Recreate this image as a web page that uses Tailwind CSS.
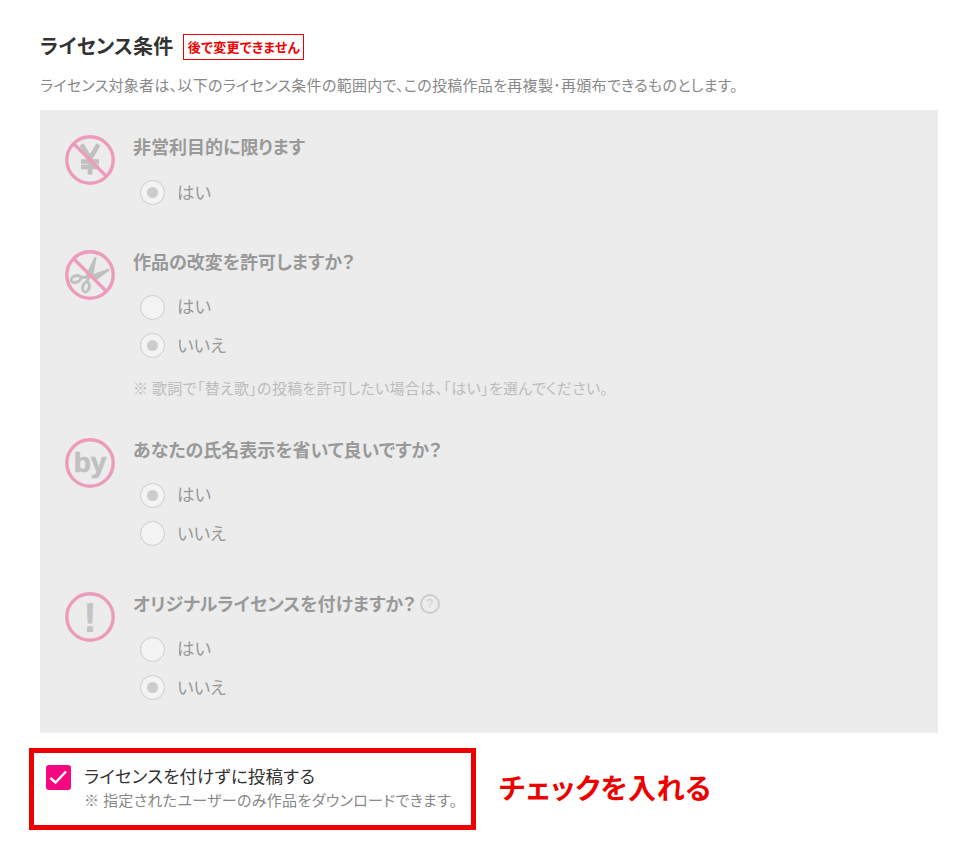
<!DOCTYPE html>
<html lang="ja">
<head>
  <meta charset="UTF-8" />
  <title>ライセンス条件</title>
  <script src="https://cdn.jsdelivr.net/npm/@tailwindcss/browser@4"></script>
</head>
<body class="bg-white font-['Noto_Sans_CJK_JP','Noto_Sans',sans-serif] text-[#333] [font-feature-settings:'palt']">

  <div class="w-[978px] h-[861px] pl-[40px] pr-[40px] pt-[34px] overflow-hidden">

    <!-- 見出し -->
    <div class="flex items-center h-[26px]">
      <h2 class="text-[20px] leading-[26px] font-bold tracking-[0.2px] -mt-[2px]">ライセンス条件</h2>
      <span class="ml-[10px] w-[121px] h-[26px] border border-[#f00000] text-[#f00000] text-[13px] font-bold leading-[23px] text-center tracking-[0.3px]">後で変更できません</span>
    </div>
    <p class="mt-[13px] h-[24px] text-[15px] leading-[24px] text-[#888] tracking-[0.3px]">ライセンス対象者は、以下のライセンス条件の範囲内で、この投稿作品を再複製･再頒布できるものとします。</p>

    <!-- 条件パネル -->
    <div class="mt-[13px] w-[898px] bg-[#ececec] pt-[25px] pb-[26px] pl-[25px]">

      <!-- 非営利 -->
      <div class="flex mb-[38.5px]">
        <svg class="w-[50px] h-[50px] shrink-0" viewBox="0 0 50 50">
          <g fill="none" stroke="#c0c0c0" stroke-width="4.6">
            <path d="M16.5 9.5 L25 23.5 L33.5 9.5"/>
            <path d="M25 23 V39.5"/>
            <path d="M16 26.5 H34"/>
            <path d="M16 32 H34"/>
          </g>
          <circle cx="25" cy="25" r="23.2" fill="none" stroke="#ed9bbb" stroke-width="3.4"/>
          <line x1="8.5" y1="8.5" x2="41.5" y2="41.5" stroke="#ed9bbb" stroke-width="3.2"/>
        </svg>
        <div class="ml-[18px] -mt-[1px]">
          <h3 class="text-[18px] leading-[25px] font-bold text-[#999] mb-[14px]">非営利目的に限ります</h3>
          <div class="flex items-center h-[38.5px] pl-[7px]">
            <span class="w-[25px] h-[25px] rounded-full border border-[#ccc] bg-[#f3f3f3] flex items-center justify-center"><span class="w-[11px] h-[11px] rounded-full bg-[#ccc]"></span></span>
            <span class="ml-[12px] text-[17.5px] leading-[24px] -mt-[1px] text-[#999]">はい</span>
          </div>
        </div>
      </div>

      <!-- 改変 -->
      <div class="flex mb-[40px]">
        <svg class="w-[50px] h-[50px] shrink-0" viewBox="0 0 50 50">
          <g fill="none" stroke="#c0c0c0" stroke-width="3">
            <ellipse cx="11" cy="29" rx="5" ry="3.2" transform="rotate(-20 11 29)"/>
            <ellipse cx="21" cy="37" rx="3.2" ry="5" transform="rotate(15 21 37)"/>
            <path d="M15.5 27.5 L25 27"/>
            <path d="M22 32 L24 27"/>
          </g>
          <path d="M20.5 26 L29.5 7 L31.5 7.2 L28 27 Z" fill="#c0c0c0"/>
          <path d="M27 24.5 L44 18.5 L44.5 20.5 L31 30.5 Z" fill="#c0c0c0"/>
          <circle cx="25" cy="25" r="23.2" fill="none" stroke="#ed9bbb" stroke-width="3.4"/>
          <line x1="8.5" y1="8.5" x2="41.5" y2="41.5" stroke="#ed9bbb" stroke-width="3.2"/>
        </svg>
        <div class="ml-[18px] -mt-[1px]">
          <h3 class="text-[18px] leading-[25px] font-bold text-[#999] mb-[14px]">作品の改変を許可しますか？</h3>
          <div class="flex items-center h-[38.5px] pl-[7px]">
            <span class="w-[25px] h-[25px] rounded-full border border-[#ccc] bg-[#f3f3f3]"></span>
            <span class="ml-[12px] text-[17.5px] leading-[24px] -mt-[2px] text-[#999]">はい</span>
          </div>
          <div class="flex items-center h-[38.5px] pl-[7px]">
            <span class="w-[25px] h-[25px] rounded-full border border-[#ccc] bg-[#f3f3f3] flex items-center justify-center"><span class="w-[11px] h-[11px] rounded-full bg-[#ccc]"></span></span>
            <span class="ml-[12px] text-[17.5px] leading-[24px] -mt-[2px] text-[#999]">いいえ</span>
          </div>
          <p class="mt-[13px] text-[15px] leading-[20px] text-[#bbb] tracking-[0.33px]">※ 歌詞で「替え歌」の投稿を許可したい場合は、「はい」を選んでください。</p>
        </div>
      </div>

      <!-- 氏名表示 -->
      <div class="flex mb-[39px]">
        <svg class="w-[50px] h-[50px] shrink-0" viewBox="0 0 50 50">
          <circle cx="25" cy="25" r="23.2" fill="none" stroke="#ed9bbb" stroke-width="3.4"/>
          <text x="25" y="33.5" text-anchor="middle" font-family="Liberation Sans" font-weight="700" font-size="28" fill="#c0c0c0" stroke="#c0c0c0" stroke-width="0.7">by</text>
        </svg>
        <div class="ml-[18px] -mt-[1px]">
          <h3 class="text-[18px] leading-[25px] font-bold text-[#999] mb-[14px]">あなたの氏名表示を省いて良いですか？</h3>
          <div class="flex items-center h-[38.5px] pl-[7px]">
            <span class="w-[25px] h-[25px] rounded-full border border-[#ccc] bg-[#f3f3f3] flex items-center justify-center"><span class="w-[11px] h-[11px] rounded-full bg-[#ccc]"></span></span>
            <span class="ml-[12px] text-[17.5px] leading-[24px] -mt-[2px] text-[#999]">はい</span>
          </div>
          <div class="flex items-center h-[38.5px] pl-[7px]">
            <span class="w-[25px] h-[25px] rounded-full border border-[#ccc] bg-[#f3f3f3]"></span>
            <span class="ml-[12px] text-[17.5px] leading-[24px] -mt-[2px] text-[#999]">いいえ</span>
          </div>
        </div>
      </div>

      <!-- オリジナル -->
      <div class="flex">
        <svg class="w-[50px] h-[50px] shrink-0" viewBox="0 0 50 50">
          <circle cx="25" cy="25" r="23.2" fill="none" stroke="#ed9bbb" stroke-width="3.4"/>
          <text x="25" y="40" text-anchor="middle" font-family="Liberation Sans" font-weight="700" font-size="42" fill="#c4c4c4">!</text>
        </svg>
        <div class="ml-[18px] -mt-[1px]">
          <div class="flex items-center mb-[14px]">
            <h3 class="text-[18px] leading-[25px] font-bold text-[#999]">オリジナルライセンスを付けますか？</h3>
            <span class="ml-[4px] w-[20px] h-[20px] rounded-full border-2 border-[#ccc] text-[#ccc] text-[13px] leading-[16px] text-center font-['Liberation_Sans',sans-serif]">?</span>
          </div>
          <div class="flex items-center h-[38.5px] pl-[7px]">
            <span class="w-[25px] h-[25px] rounded-full border border-[#ccc] bg-[#f3f3f3]"></span>
            <span class="ml-[12px] text-[17.5px] leading-[24px] -mt-[2px] text-[#999]">はい</span>
          </div>
          <div class="flex items-center h-[38.5px] pl-[7px]">
            <span class="w-[25px] h-[25px] rounded-full border border-[#ccc] bg-[#f3f3f3] flex items-center justify-center"><span class="w-[11px] h-[11px] rounded-full bg-[#ccc]"></span></span>
            <span class="ml-[12px] text-[17.5px] leading-[24px] -mt-[2px] text-[#999]">いいえ</span>
          </div>
        </div>
      </div>
    </div>

    <!-- ライセンスなしで投稿 -->
    <div class="flex items-center mt-[15px] ml-[-11px]">
      <div class="flex w-[447px] h-[82px] border-[5px] border-[#ee0000] pl-[12px] pt-[12px]">
        <span class="w-[25px] h-[25px] rounded-[3px] bg-[#f5087f] shrink-0">
          <svg class="w-[25px] h-[25px]" viewBox="0 0 25 25"><path d="M4.5 13 L9.5 17.5 L20 6.5" fill="none" stroke="#fff" stroke-width="2.4"/></svg>
        </span>
        <div class="ml-[13px]">
          <p class="text-[17.5px] leading-[24px] -mt-[1px] text-[#333] tracking-[0.2px]">ライセンスを付けずに投稿する</p>
          <p class="text-[15px] leading-[24px] text-[#888] tracking-[0.33px]">※ 指定されたユーザーのみ作品をダウンロードできます。</p>
        </div>
      </div>
      <p class="ml-[23px] text-[28px] leading-[36px] -mt-[4px] font-bold text-[#ee0000] tracking-[0.5px]">チェックを入れる</p>
    </div>
  </div>

</body>
</html>
